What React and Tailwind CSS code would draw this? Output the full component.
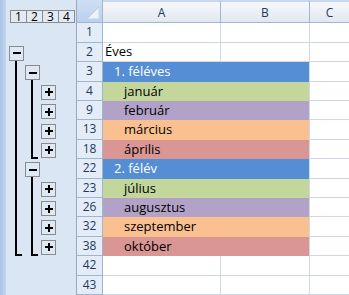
import React from "react";

const FILLS = {
  blue: "bg-[#558ed5] text-white",
  green: "bg-[#c3d69b] text-black",
  purple: "bg-[#b2a2c7] text-black",
  orange: "bg-[#fac090] text-black",
  red: "bg-[#d99694] text-black",
};

const INDENT = ["pl-[2px]", "pl-[11px]", "pl-[21px]"];

// outline marks per row: [level1, level2, level3]
// m = minus button, p = plus button, l = line, e = line end, "" = empty
const rows = [
  { n: 1, outline: ["", "", ""] },
  { n: 2, text: "Éves", indent: 0, outline: ["m", "", ""] },
  { n: 3, text: "1. féléves", fill: "blue", indent: 1, outline: ["l", "m", ""] },
  { n: 4, text: "január", fill: "green", indent: 2, outline: ["l", "l", "p"] },
  { n: 9, text: "február", fill: "purple", indent: 2, outline: ["l", "l", "p"] },
  { n: 13, text: "március", fill: "orange", indent: 2, outline: ["l", "l", "p"] },
  { n: 18, text: "április", fill: "red", indent: 2, outline: ["l", "e", "p"] },
  { n: 22, text: "2. félév", fill: "blue", indent: 1, outline: ["l", "m", ""] },
  { n: 23, text: "július", fill: "green", indent: 2, outline: ["l", "l", "p"] },
  { n: 26, text: "augusztus", fill: "purple", indent: 2, outline: ["l", "l", "p"] },
  { n: 32, text: "szeptember", fill: "orange", indent: 2, outline: ["l", "l", "p"] },
  { n: 38, text: "október", fill: "red", indent: 2, outline: ["e", "e", "p"] },
  { n: 42, outline: ["", "", ""] },
  { n: 43, outline: ["", "", ""] },
];

function OutlineButton({ plus }) {
  return (
    <div className="relative w-[15px] h-[15px] border border-[#8a8a8a] bg-[#dfe8f5] flex items-center justify-center">
      <span className="w-[8px] h-[2px] bg-black" />
      {plus && <span className="absolute w-[2px] h-[8px] bg-black" />}
    </div>
  );
}

function OutlineCell({ kind }) {
  if (kind === "m" || kind === "p") {
    return (
      <div className="w-[16px] shrink-0 h-full flex flex-col">
        <div className="mt-[3px]">
          <OutlineButton plus={kind === "p"} />
        </div>
        {kind === "m" && <div className="ml-[6px] w-[2px] flex-1 bg-black" />}
      </div>
    );
  }
  if (kind === "l") {
    return (
      <div className="w-[16px] shrink-0 h-full">
        <div className="ml-[6px] w-[2px] h-full bg-black" />
      </div>
    );
  }
  if (kind === "e") {
    return (
      <div className="w-[16px] shrink-0 h-full">
        <div className="ml-[6px] w-[7px] h-[19px] border-l-2 border-b-2 border-black" />
      </div>
    );
  }
  return <div className="w-[16px] shrink-0 h-full" />;
}

function OutlinePane() {
  return (
    <div className="flex w-[77px] shrink-0">
      <div className="w-[6px] shrink-0 bg-linear-to-r from-[#a9c3e8] to-[#c3d6f0]" />
      <div className="flex-1 min-w-0 overflow-hidden flex flex-col bg-[#dbe6f5] border-r border-[#9aa9be]">
        <div className="h-[24px] flex items-start pt-[10px] pl-[4px]">
          {["1", "2", "3", "4"].map((l, i) => (
            <div
              key={l}
              className={`w-[17px] h-[13px] shrink-0 border border-[#8a8a8a] bg-[#e2eaf6] flex items-center justify-center text-[12px] leading-none text-black ${
                i > 0 ? "-ml-px" : ""
              }`}
            >
              {l}
            </div>
          ))}
        </div>
        {rows.map((r) => (
          <div key={r.n} className="h-[20px] flex pl-[3px]">
            {r.outline.map((k, i) => (
              <OutlineCell key={i} kind={k} />
            ))}
          </div>
        ))}
      </div>
    </div>
  );
}

function ColHeader({ label, className }) {
  return (
    <div
      className={`h-full border-t-2 border-t-[#c6d9f1] border-b border-b-[#9eb6ce] bg-linear-to-b from-[#f5f7fb] to-[#e2e8f0] text-center text-[12px] leading-[16px] pt-[3px] text-[#1f3a5c] ${className}`}
    >
      {label}
    </div>
  );
}

function Sheet() {
  return (
    <div className="flex-1 flex flex-col">
      <div className="h-[24px] flex">
        <div className="relative w-[26px] h-full bg-linear-to-b from-[#cfdef2] to-[#bcd0ec] border-r border-b border-[#9eb6ce]">
          <svg className="absolute right-[3px] bottom-[3px]" width="12" height="12" viewBox="0 0 12 12">
            <polygon points="12,0 12,12 0,12" fill="#eef2f8" stroke="#a8b8cc" strokeWidth="0.5" />
          </svg>
        </div>
        <ColHeader label="A" className="w-[118px] border-r border-r-[#9eb6ce]" />
        <ColHeader label="B" className="w-[89px] border-r border-r-[#9eb6ce]" />
        <ColHeader label="C" className="flex-1" />
      </div>
      {rows.map((r) => (
        <div key={r.n} className="h-[20px] flex text-[13px] leading-[16px]">
          <div className="w-[26px] h-full bg-[#e4ecf7] border-r border-b border-[#9eb6ce] text-center text-[12px] pt-[1px] text-[#1f3a5c]">
            {r.n}
          </div>
          {r.fill ? (
            <div
              className={`w-[207px] h-full border-r border-[#d0d7e5] whitespace-nowrap ${FILLS[r.fill]} ${INDENT[r.indent]} pt-[1px]`}
            >
              {r.text}
            </div>
          ) : (
            <>
              <div className={`w-[118px] h-full border-r border-b border-[#d0d7e5] whitespace-nowrap text-black ${INDENT[r.indent || 0]}`}>
                {r.text}
              </div>
              <div className="w-[89px] h-full border-r border-b border-[#d0d7e5]" />
            </>
          )}
          <div className="flex-1 h-full border-b border-[#d0d7e5] bg-white" />
        </div>
      ))}
    </div>
  );
}

export default function App() {
  return (
    <div
      className="w-[349px] h-[295px] overflow-hidden flex bg-white"
      style={{ fontFamily: '"Open Sans", "Liberation Sans", sans-serif' }}
    >
      <OutlinePane />
      <Sheet />
    </div>
  );
}
